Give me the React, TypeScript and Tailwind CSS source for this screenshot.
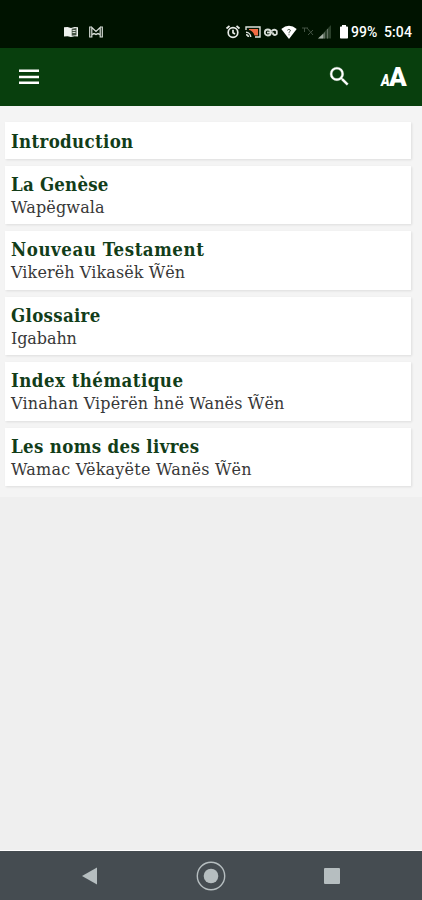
type Entry = {
  title: string;
  subtitle?: string;
  titleClass: string;
  subtitleClass?: string;
};

const entries: Entry[] = [
  { title: "Introduction", titleClass: "tracking-[0.33px]" },
  { title: "La Genèse", subtitle: "Wapëgwala", titleClass: "tracking-[0.2px]", subtitleClass: "tracking-[0.15px]" },
  { title: "Nouveau Testament", subtitle: "Vikerëh Vikasëk W̃ën", titleClass: "tracking-[0.55px]", subtitleClass: "tracking-[0.1px]" },
  { title: "Glossaire", subtitle: "Igabahn", titleClass: "tracking-[0.3px]", subtitleClass: "tracking-[-0.1px]" },
  { title: "Index thématique", subtitle: "Vinahan Vipërën hnë Wanës W̃ën", titleClass: "tracking-[0.47px]", subtitleClass: "tracking-[0.15px]" },
  { title: "Les noms des livres", subtitle: "Wamac Vëkayëte Wanës W̃ën", titleClass: "tracking-[0.35px]", subtitleClass: "tracking-[0.22px]" },
];

function StatusBar() {
  return (
    <div className="flex h-12 shrink-0 items-start bg-[#001300] pt-6 text-white">
      {/* Notifications */}
      <svg className="ml-[63px] h-4 w-4" viewBox="0 0 16 16">
        <path d="M1 3.2l3.5-.2L8 4l3.5-1 3.5.2v9.3l-3.5-.3L8 13l-3.5-.8-3.5.3z" fill="#eef2ee" />
        <path d="M8.7 4.8l4.8-.8v7.2l-4.8.5z" fill="#455345" />
        <path d="M9.5 6.5h3M9.5 8.5h3" stroke="#d7ddd7" />
      </svg>
      <svg className="ml-[9px] h-4 w-4" viewBox="0 0 16 16" fill="none" stroke="#d5dbd5">
        <path d="M3.8 3H1.7v10h2.1V3.5L8 7.5l4.2-4V13h2.1V3h-2.1" strokeWidth="1.2" />
        <path d="M4 10.5l2-1 2 1 2-1 2 1" strokeWidth="1.4" />
      </svg>

      {/* System icons */}
      <svg className="ml-[121px] h-4 w-4" viewBox="0 0 16 16" fill="none" stroke="#e8ece8" strokeWidth="1.7">
        <circle cx="8" cy="8.5" r="4.8" />
        <path d="M8 5.7v3l2 1.2M1.5 4.5l3-2.5M14.5 4.5l-3-2.5" />
      </svg>
      <svg className="ml-[4px] h-4 w-4" viewBox="0 0 16 16">
        <path d="M1 6V3h14v10h-5" fill="none" stroke="#dce2dc" strokeWidth="1.4" />
        <path d="M4 5h9v6.5H9.5C8.5 8 6.5 6.5 4 6z" fill="#f26b43" />
        <path d="M1 8.3A4.7 4.7 0 0 1 5.7 13M1 10.7A2.3 2.3 0 0 1 3.3 13" fill="none" stroke="#dce2dc" strokeWidth="1.5" />
      </svg>
      <svg className="ml-[2px] h-4 w-4" viewBox="0 0 16 16" fill="none" stroke="#d8ded8" strokeWidth="1.8">
        <circle cx="4.8" cy="8.5" r="3" />
        <path d="M4 8.5h5.5" />
        <path d="M8.5 7Q12 4.5 13.8 7v3q-1.8 2-3.8 0V8.5" />
      </svg>
      <svg className="ml-[2px] h-4 w-4" viewBox="0 0 16 16">
        <path d="M0.3 5Q8-1.5 15.7 5L8 15z" fill="#fff" />
        <path d="M6.3 6.3Q8 4.5 9.3 6 10 7.2 8 8.3v1M8 10.3v1" fill="none" stroke="#526052" />
      </svg>
      <svg className="ml-[4px] h-4 w-4" viewBox="0 0 16 16" fill="none" stroke="#435343">
        <path d="M1 4h6M3.5 4v4M6 4l6 7M12 6l-5 5" />
      </svg>
      <svg className="ml-[1px] h-4 w-4" viewBox="0 0 16 16">
        <path d="M0 14.5L13 1v13.5z" fill="#2b402b" />
        <path d="M0 14.5l5.5-5v5z" fill="#a7b1a7" />
        <path d="M6.5 8.5v6M9.5 5v9.5" stroke="#647264" />
      </svg>
      <svg className="ml-[5px] h-4 w-[10px]" viewBox="0 0 10 16">
        <path d="M3 1h4v1.5h1.2q.8 0 .8.8v10.4q0 .8-.8.8H1.8q-.8 0-.8-.8V3.3q0-.8.8-.8H3z" fill="#fff" />
      </svg>
      <span className="ml-[2px] w-[33px] font-[Roboto,sans-serif] text-sm leading-4 font-medium">99%</span>
      <span className="font-[Roboto,sans-serif] text-sm leading-4 font-medium tracking-[0.1px]">5:04</span>
    </div>
  );
}

function Toolbar() {
  return (
    <header className="flex h-[57.5px] shrink-0 items-center bg-[#083f0d] pr-4 pl-[19px] text-white">
      <svg className="h-4 w-5" viewBox="0 0 20 16" stroke="currentColor" strokeWidth="2.4">
        <path d="M0 1.7h20M0 8h20M0 13.7h20" />
      </svg>
      <svg className="ml-auto h-[25px] w-[25px]" viewBox="0 0 24 24" fill="currentColor" stroke="currentColor" strokeWidth="0.3">
        <path d="M15.5 14h-.79l-.28-.27A6.47 6.47 0 0 0 16 9.5 6.5 6.5 0 1 0 9.5 16c1.61 0 3.09-.59 4.23-1.57l.27.28v.79l5 4.99L20.49 19l-4.99-5zm-6 0C7.01 14 5 11.99 5 9.5S7.01 5 9.5 5 14 7.01 14 9.5 11.99 14 9.5 14z" />
      </svg>
      <div className="ml-[29px] flex h-7 w-[25px] items-baseline font-[Roboto,sans-serif] font-black">
        <span className="w-[8px] text-[17px] leading-7 tracking-[-2px] italic">
          <span className="inline-block origin-left scale-x-[.78]">A</span>
        </span>
        <span className="text-[26px] leading-7">A</span>
      </div>
    </header>
  );
}

function EntryCard({ entry }: { entry: Entry }) {
  return (
    <div className={`w-[406px] bg-white pl-[6.5px] shadow-[1px_1px_2px_#dedede] ${entry.subtitle ? "h-[58.5px] pt-[7px]" : "h-[36.5px] pt-[8px]"}`}>
      <div className={`text-[18.5px] leading-6 font-bold whitespace-nowrap text-[#123d19] ${entry.titleClass}`}>
        {entry.title}
      </div>
      {entry.subtitle && (
        <div className={`font-['DejaVu_Serif',serif] text-[16px] leading-[22px] whitespace-nowrap text-[#383838] ${entry.subtitleClass}`}>
          {entry.subtitle}
        </div>
      )}
    </div>
  );
}

function NavigationBar() {
  return (
    <nav className="flex h-[49px] shrink-0 items-center bg-[#454c51] pl-[82px] text-[#b6bec0]">
      <svg className="h-[18px] w-4" viewBox="0 0 16 18" fill="currentColor">
        <path d="M0 9L15 .5v17z" />
      </svg>
      <svg className="ml-[98px] h-[30px] w-[30px]" viewBox="0 0 30 30">
        <circle cx="15" cy="15" r="13.7" fill="none" stroke="currentColor" strokeWidth="1.4" />
        <circle cx="15" cy="15" r="7.3" fill="currentColor" />
      </svg>
      <div className="ml-[98px] h-4 w-4 rounded-[1px] bg-[#b6bec0]" />
    </nav>
  );
}

export default function App() {
  return (
    <div className="flex h-[900px] w-[422px] flex-col overflow-hidden bg-[#efefef]">
      <StatusBar />
      <Toolbar />
      <main className="flex h-[391px] flex-col gap-[7px] bg-[#f4f4f4] pt-[16.5px] pl-[4.5px] font-['DejaVu_Serif_Condensed','DejaVu_Serif',serif]">
        {entries.map((entry) => (
          <EntryCard key={entry.title} entry={entry} />
        ))}
      </main>
      <div className="flex-1 border-b border-white" />
      <NavigationBar />
    </div>
  );
}
